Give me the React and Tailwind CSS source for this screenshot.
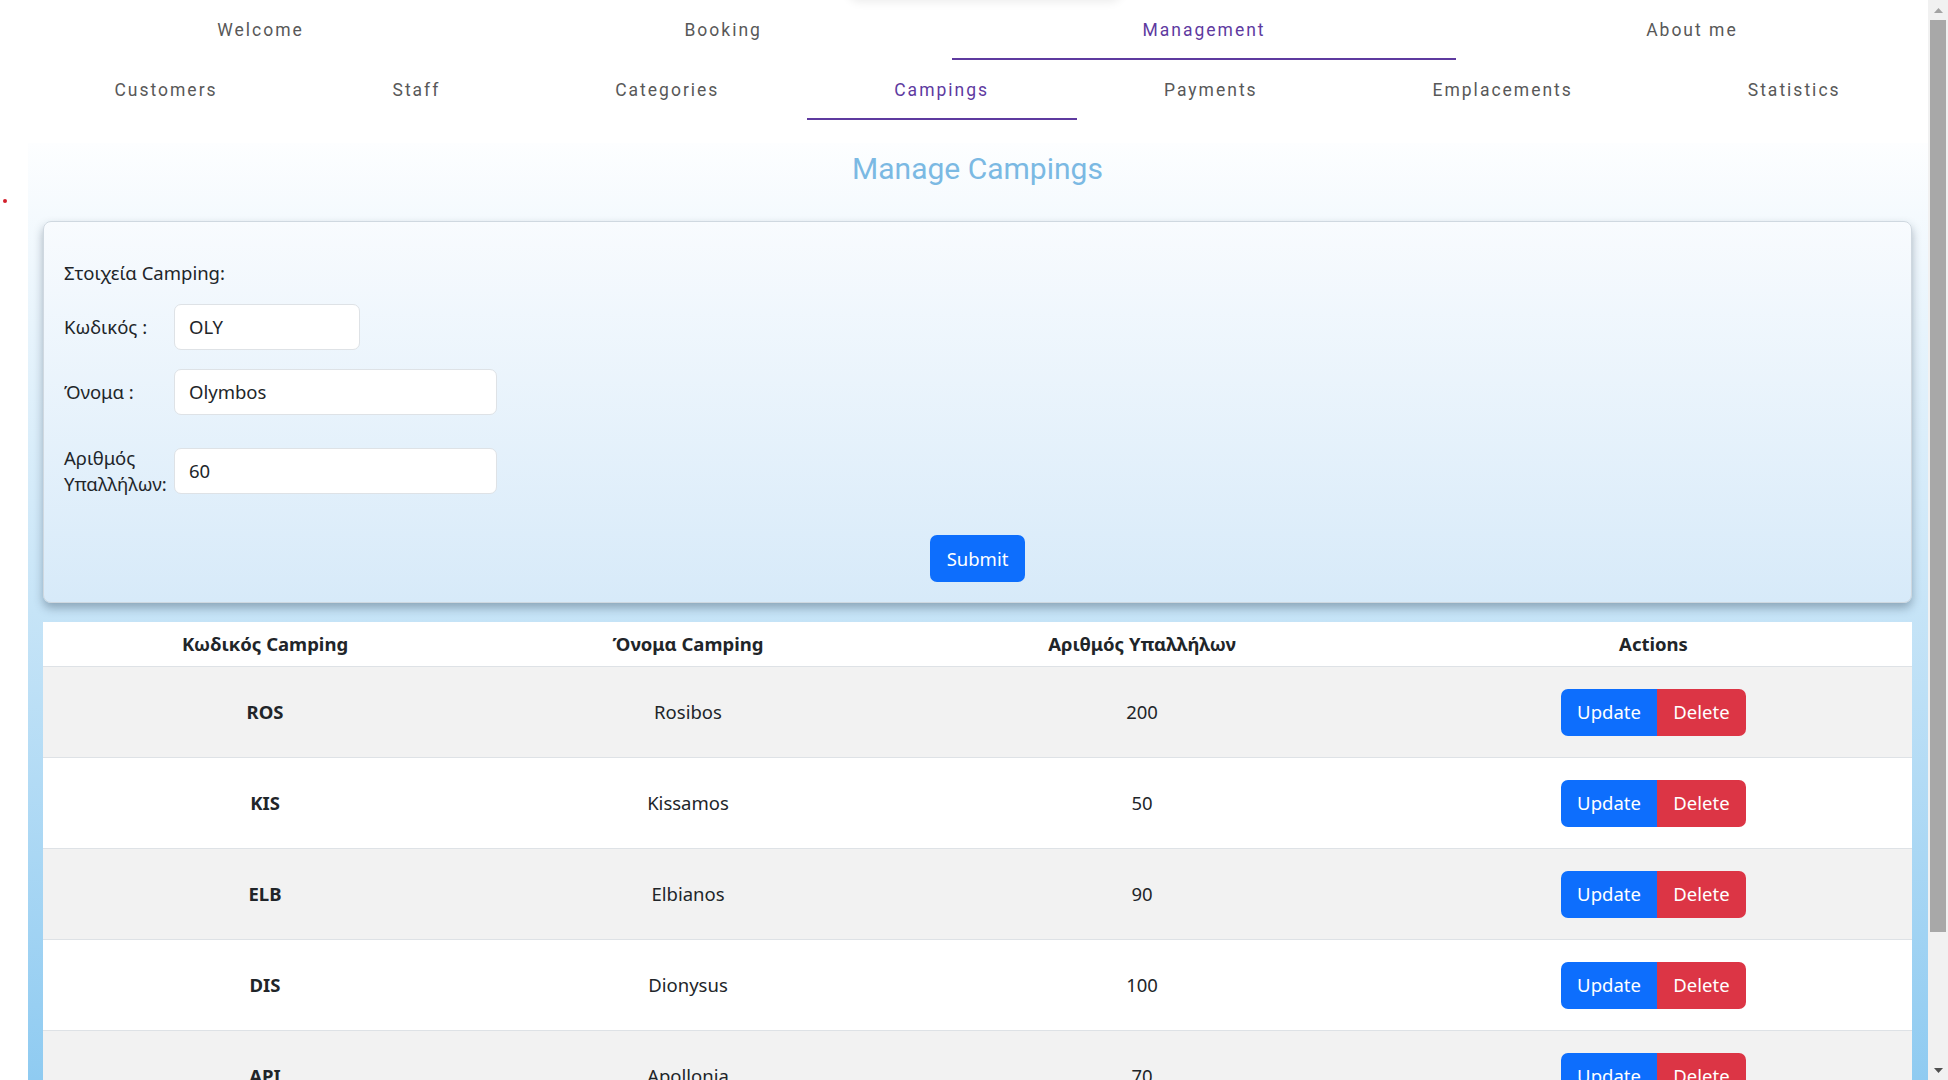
import React from 'react';

const mainTabs = [
  { label: 'Welcome' },
  { label: 'Booking' },
  { label: 'Management', active: true },
  { label: 'About me' },
];

const subTabs = [
  { label: 'Customers' },
  { label: 'Staff' },
  { label: 'Categories' },
  { label: 'Campings', active: true },
  { label: 'Payments' },
  { label: 'Emplacements' },
  { label: 'Statistics' },
];

const campings = [
  { code: 'ROS', name: 'Rosibos', staff: 200 },
  { code: 'KIS', name: 'Kissamos', staff: 50 },
  { code: 'ELB', name: 'Elbianos', staff: 90 },
  { code: 'DIS', name: 'Dionysus', staff: 100 },
  { code: 'API', name: 'Apollonia', staff: 70 },
];

function TabRow({ tabs }) {
  return (
    <div className="flex shrink-0 h-[60px]">
      {tabs.map((tab) => (
        <div
          key={tab.label}
          className={`flex-auto flex items-center justify-center border-b-2 pt-[2px] text-[17.5px] font-normal tracking-[2px] ${
            tab.active ? 'border-[#5e3a9f] text-[#5e3a9f]' : 'border-transparent text-[#585858]'
          }`}
        >
          {tab.label}
        </div>
      ))}
    </div>
  );
}

function Field({ label, value, width, tall }) {
  return (
    <div className={`flex items-center ${tall ? 'h-[52px]' : 'h-[46px]'}`}>
      <div className="w-[110px] leading-[26px]">{label}</div>
      <div
        className={`${width} h-[46px] flex items-center px-[14px] bg-white border border-[#dee2e6] rounded-[7px] text-[#212529]`}
      >
        {value}
      </div>
    </div>
  );
}

export default function App() {
  return (
    <div
      className="relative w-[1948px] h-[1080px] overflow-hidden bg-white flex"
      style={{ fontFamily: 'Roboto, "Noto Sans", sans-serif' }}
    >
      {/* faint shadow of something above the viewport */}
      <div className="absolute left-[848px] top-[-40px] w-[274px] h-[40px] rounded-[12px] bg-white shadow-[0_2px_10px_rgba(0,0,0,0.08)]" />
      {/* stray red dot */}
      <div className="absolute left-[3px] top-[199px] w-[4px] h-[4px] rounded-full bg-[#d21f2b]" />

      <div className="flex-1 min-w-0 flex flex-col pl-[27px]">
        <TabRow tabs={mainTabs} />
        <TabRow tabs={subTabs} />

        <div className="mt-[23px] ml-[1px] flex-1 min-h-0 overflow-hidden bg-gradient-to-b from-[#fdfeff] via-[#c6e4f7] to-[#8fcbf1] pl-[15px] pr-[16px] pt-[8px]">
          <h1 className="text-center text-[30px] leading-[36px] font-normal text-[#7bb9e3]">Manage Campings</h1>

          <div
            className="mt-[34px] text-[18.5px] text-[#212529]"
            style={{ fontFamily: '"Noto Sans", "Open Sans", sans-serif' }}
          >
            {/* form card */}
            <div className="rounded-[8px] border border-[#cfd8e0] bg-gradient-to-b from-[#f8fbfe] to-[#d7eaf9] shadow-[0_5px_10px_rgba(30,50,70,0.35)] px-[20px] pt-[38px] pb-[20px]">
              <div className="leading-[26px]">Στοιχεία Camping:</div>
              <div className="mt-[18px]">
                <Field label="Κωδικός :" value="OLY" width="w-[186px]" />
              </div>
              <div className="mt-[19px]">
                <Field label="Όνομα :" value="Olymbos" width="w-[323px]" />
              </div>
              <div className="mt-[30px]">
                <Field
                  label={
                    <>
                      Αριθμός
                      <br />
                      Υπαλλήλων:
                    </>
                  }
                  value="60"
                  width="w-[323px]"
                  tall
                />
              </div>
              <div className="mt-[38px] flex justify-center">
                <button className="w-[95px] h-[47px] rounded-[7px] bg-[#0d6efd] text-white">Submit</button>
              </div>
            </div>

            {/* campings table */}
            <div className="mt-[19px] bg-white">
              <div className="grid grid-cols-[444px_402px_506px_1fr] h-[45px] items-center text-center font-bold border-b border-[#dee2e6]">
                <div>Κωδικός Camping</div>
                <div>Όνομα Camping</div>
                <div>Αριθμός Υπαλλήλων</div>
                <div>Actions</div>
              </div>
              {campings.map((c, i) => (
                <div
                  key={c.code}
                  className={`grid grid-cols-[444px_402px_506px_1fr] h-[91px] items-center text-center border-b border-[#dee2e6] ${
                    i % 2 === 0 ? 'bg-[#f2f2f2]' : 'bg-white'
                  }`}
                >
                  <div className="font-bold">{c.code}</div>
                  <div>{c.name}</div>
                  <div>{c.staff}</div>
                  <div className="flex justify-center">
                    <button className="w-[96px] h-[47px] rounded-l-[7px] bg-[#0d6efd] text-white">Update</button>
                    <button className="w-[89px] h-[47px] rounded-r-[7px] bg-[#dc3545] text-white">Delete</button>
                  </div>
                </div>
              ))}
            </div>
          </div>
        </div>
      </div>

      {/* scrollbar */}
      <div className="w-[20px] shrink-0 h-full bg-[#f1f1f1] flex flex-col items-center">
        <div className="h-[20px] flex items-center justify-center">
          <svg width="9" height="5" viewBox="0 0 9 5">
            <path d="M0 5 L4.5 0 L9 5 Z" fill="#a3a3a3" />
          </svg>
        </div>
        <div className="w-[16px] h-[912px] bg-[#a8a8a8]" />
        <div className="flex-1" />
        <div className="h-[20px] flex items-center justify-center">
          <svg width="9" height="5" viewBox="0 0 9 5">
            <path d="M0 0 L9 0 L4.5 5 Z" fill="#505050" />
          </svg>
        </div>
      </div>
    </div>
  );
}
